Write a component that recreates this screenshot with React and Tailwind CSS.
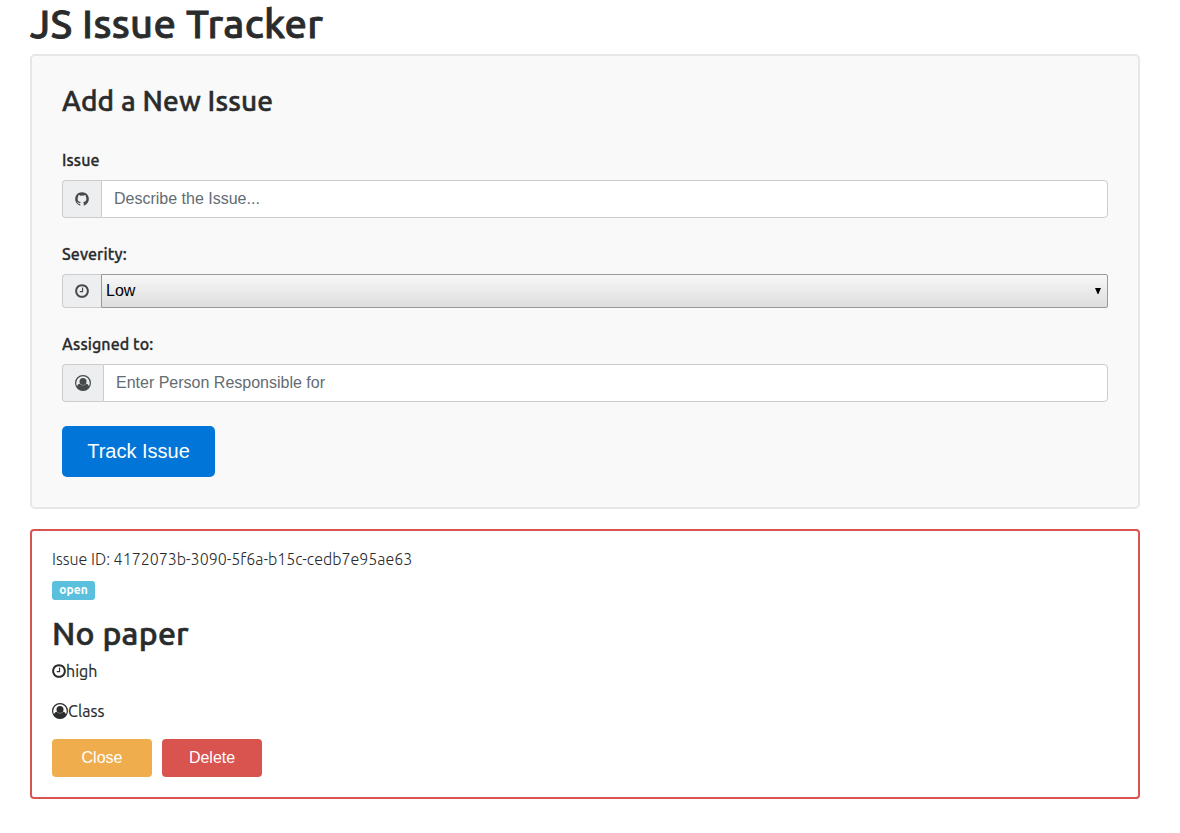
import React from "react";

function GithubIcon() {
  return (
    <svg viewBox="0 0 1536 1792" className="h-4 w-[14px]" fill="currentColor" aria-hidden="true">
      <path d="M768 128q209 0 385.5 103t279.5 279.5 103 385.5q0 251-146.5 451.5t-378.5 277.5q-27 5-40-7t-13-30q0-3 .5-76.5t.5-134.5q0-97-52-142 57-6 102.5-18t94-39 81-66.5 53-105 20.5-150.5q0-119-79-206 37-91-8-204-28-9-81 11t-92 44l-38 24q-93-26-192-26t-192 26q-16-11-42.5-27t-83.5-38.5-85-13.5q-45 113-8 204-79 87-79 206 0 85 20.5 150t52.5 105 80.5 67 94 39 102.5 18q-39 36-49 103-21 10-45 15t-57 5-65.5-21.5-55.5-62.5q-19-32-48.5-52t-49.5-24l-20-3q-21 0-29 4.5t-5 11.5 9 14 13 12l7 5q22 10 43.5 38t31.5 51l10 23q13 38 44 61.5t67 30 69.5 7 55.5-3.5l23-4q0 38 .5 88.5t.5 54.5q0 18-13 30t-40 7q-232-77-378.5-277.5t-146.5-451.5q0-209 103-385.5t279.5-279.5 385.5-103z" />
    </svg>
  );
}

function ClockIcon() {
  return (
    <svg viewBox="0 0 1536 1792" className="h-4 w-[14px] shrink-0" fill="currentColor" aria-hidden="true">
      <path d="M896 544v448q0 14-9 23t-23 9h-320q-14 0-23-9t-9-23v-64q0-14 9-23t23-9h224v-352q0-14 9-23t23-9h64q14 0 23 9t9 23zm416 352q0-148-73-273t-198-198-273-73-273 73-198 198-73 273 73 273 198 198 273 73 273-73 198-198 73-273zm224 0q0 209-103 385.5t-279.5 279.5-385.5 103-385.5-103-279.5-279.5-103-385.5 103-385.5 279.5-279.5 385.5-103 385.5 103 279.5 279.5 103 385.5z" />
    </svg>
  );
}

function UserIcon() {
  return (
    <svg viewBox="0 0 16 16" className="size-4 shrink-0" aria-hidden="true">
      <circle cx="8" cy="8" r="7.4" fill="none" stroke="currentColor" strokeWidth="1.2" />
      <circle cx="8" cy="6.4" r="3.5" fill="currentColor" />
      <path
        d="M1.8 12C2.2 10.3 3.2 8.9 4.9 8.8C5.8 9.8 6.8 10.3 8 10.3C9.2 10.3 10.2 9.8 11.1 8.8C12.8 8.9 13.8 10.3 14.2 12A7.4 7.4 0 0 1 1.8 12Z"
        fill="currentColor"
      />
    </svg>
  );
}

function Field({ label, icon, children }) {
  return (
    <div className="mb-6">
      <label className="mb-2 block h-6 text-base leading-6 font-medium tracking-[0.1px] [-webkit-text-stroke:0.3px_#292b2c]">
        {label}
      </label>
      <div className="flex">
        <span className="flex shrink-0 items-center rounded-l border border-r-0 border-[#cccccc] bg-[#eceeef] px-3 text-[#464a4c]">
          {icon}
        </span>
        {children}
      </div>
    </div>
  );
}

const inputClass =
  "h-[38px] min-w-0 flex-1 rounded-r border border-[#cccccc] bg-white px-3 font-['Liberation_Sans',Arial,sans-serif] text-base text-[#464a4c] outline-none placeholder:text-[#636c72] placeholder:opacity-100";

function IssueForm() {
  return (
    <form className="mb-5 rounded-[5px] border-2 border-[#e7e7e7] bg-[#f9f9f9] p-[30px]" onSubmit={(e) => e.preventDefault()}>
      <h3 className="mb-8 h-[30px] text-[28px] leading-[30px] font-medium tracking-[0.15px] whitespace-nowrap [-webkit-text-stroke:0.5px_#292b2c]">
        Add a New Issue
      </h3>
      <Field label="Issue" icon={<GithubIcon />}>
        <input type="text" className={inputClass} placeholder="Describe the Issue..." />
      </Field>
      <Field label="Severity:" icon={<ClockIcon />}>
        <div className="grid h-[34px] flex-1">
          <select className="col-start-1 row-start-1 appearance-none rounded-r-[2px] border border-[#999999] bg-linear-to-b from-[#f8f8f8] to-[#dddddd] px-1 font-['Liberation_Sans',Arial,sans-serif] text-base text-black outline-none">
            <option>Low</option>
            <option>Medium</option>
            <option>High</option>
          </select>
          <svg viewBox="0 0 6 6" className="pointer-events-none col-start-1 row-start-1 mr-[7px] size-1.5 self-center justify-self-end" aria-hidden="true">
            <path d="M0 0H6L3.4 6H2.6Z" fill="#000" />
          </svg>
        </div>
      </Field>
      <Field label="Assigned to:" icon={<UserIcon />}>
        <input type="text" className={inputClass} placeholder="Enter Person Responsible for" />
      </Field>
      <button className="block h-[51px] w-[153px] rounded-[5px] bg-[#0275d8] pb-px text-center font-['Liberation_Sans',Arial,sans-serif] text-xl text-white">
        Track Issue
      </button>
    </form>
  );
}

function IssueCard() {
  return (
    <section className="rounded border-2 border-[#d9534f] bg-white p-5">
      <h6 className="h-[18px] text-base leading-4 font-light whitespace-nowrap">
        Issue ID: 4172073b-3090-5f6a-b15c-cedb7e95ae63
      </h6>
      <div className="mt-3 flex">
        <span className="flex h-[19px] w-[43px] items-center justify-center rounded-[3px] bg-[#5bc0de] pb-0.5 text-xs leading-none font-bold text-white">
          open
        </span>
      </div>
      <h3 className="mt-4 h-[35px] text-[32px] leading-[35px] font-medium tracking-[0.25px] whitespace-nowrap [-webkit-text-stroke:0.6px_#292b2c]">
        No paper
      </h3>
      <p className="mt-2 flex h-6 items-center text-base leading-6 [-webkit-text-stroke:0.2px_#292b2c]">
        <ClockIcon />
        <span>high</span>
      </p>
      <p className="mt-4 flex h-6 items-center text-base leading-6 tracking-[0.1px] [-webkit-text-stroke:0.2px_#292b2c]">
        <UserIcon />
        <span>Class</span>
      </p>
      <div className="mt-4 flex gap-2.5 font-['Liberation_Sans',Arial,sans-serif] text-base text-white">
        <button className="h-[38px] w-[100px] rounded bg-[#f0ad4e]">Close</button>
        <button className="h-[38px] w-[100px] rounded bg-[#d9534f]">Delete</button>
      </div>
    </section>
  );
}

export default function App() {
  return (
    <main className="min-h-[833px] bg-white pt-0.5 pr-10 pl-[30px] font-[Ubuntu,'Noto_Sans',sans-serif] text-[#292b2c]">
      <h1 className="mb-2 h-11 text-[40px] leading-[44px] font-medium tracking-[0.3px] whitespace-nowrap [-webkit-text-stroke:0.8px_#292b2c]">
        JS Issue Tracker
      </h1>
      <IssueForm />
      <IssueCard />
    </main>
  );
}
